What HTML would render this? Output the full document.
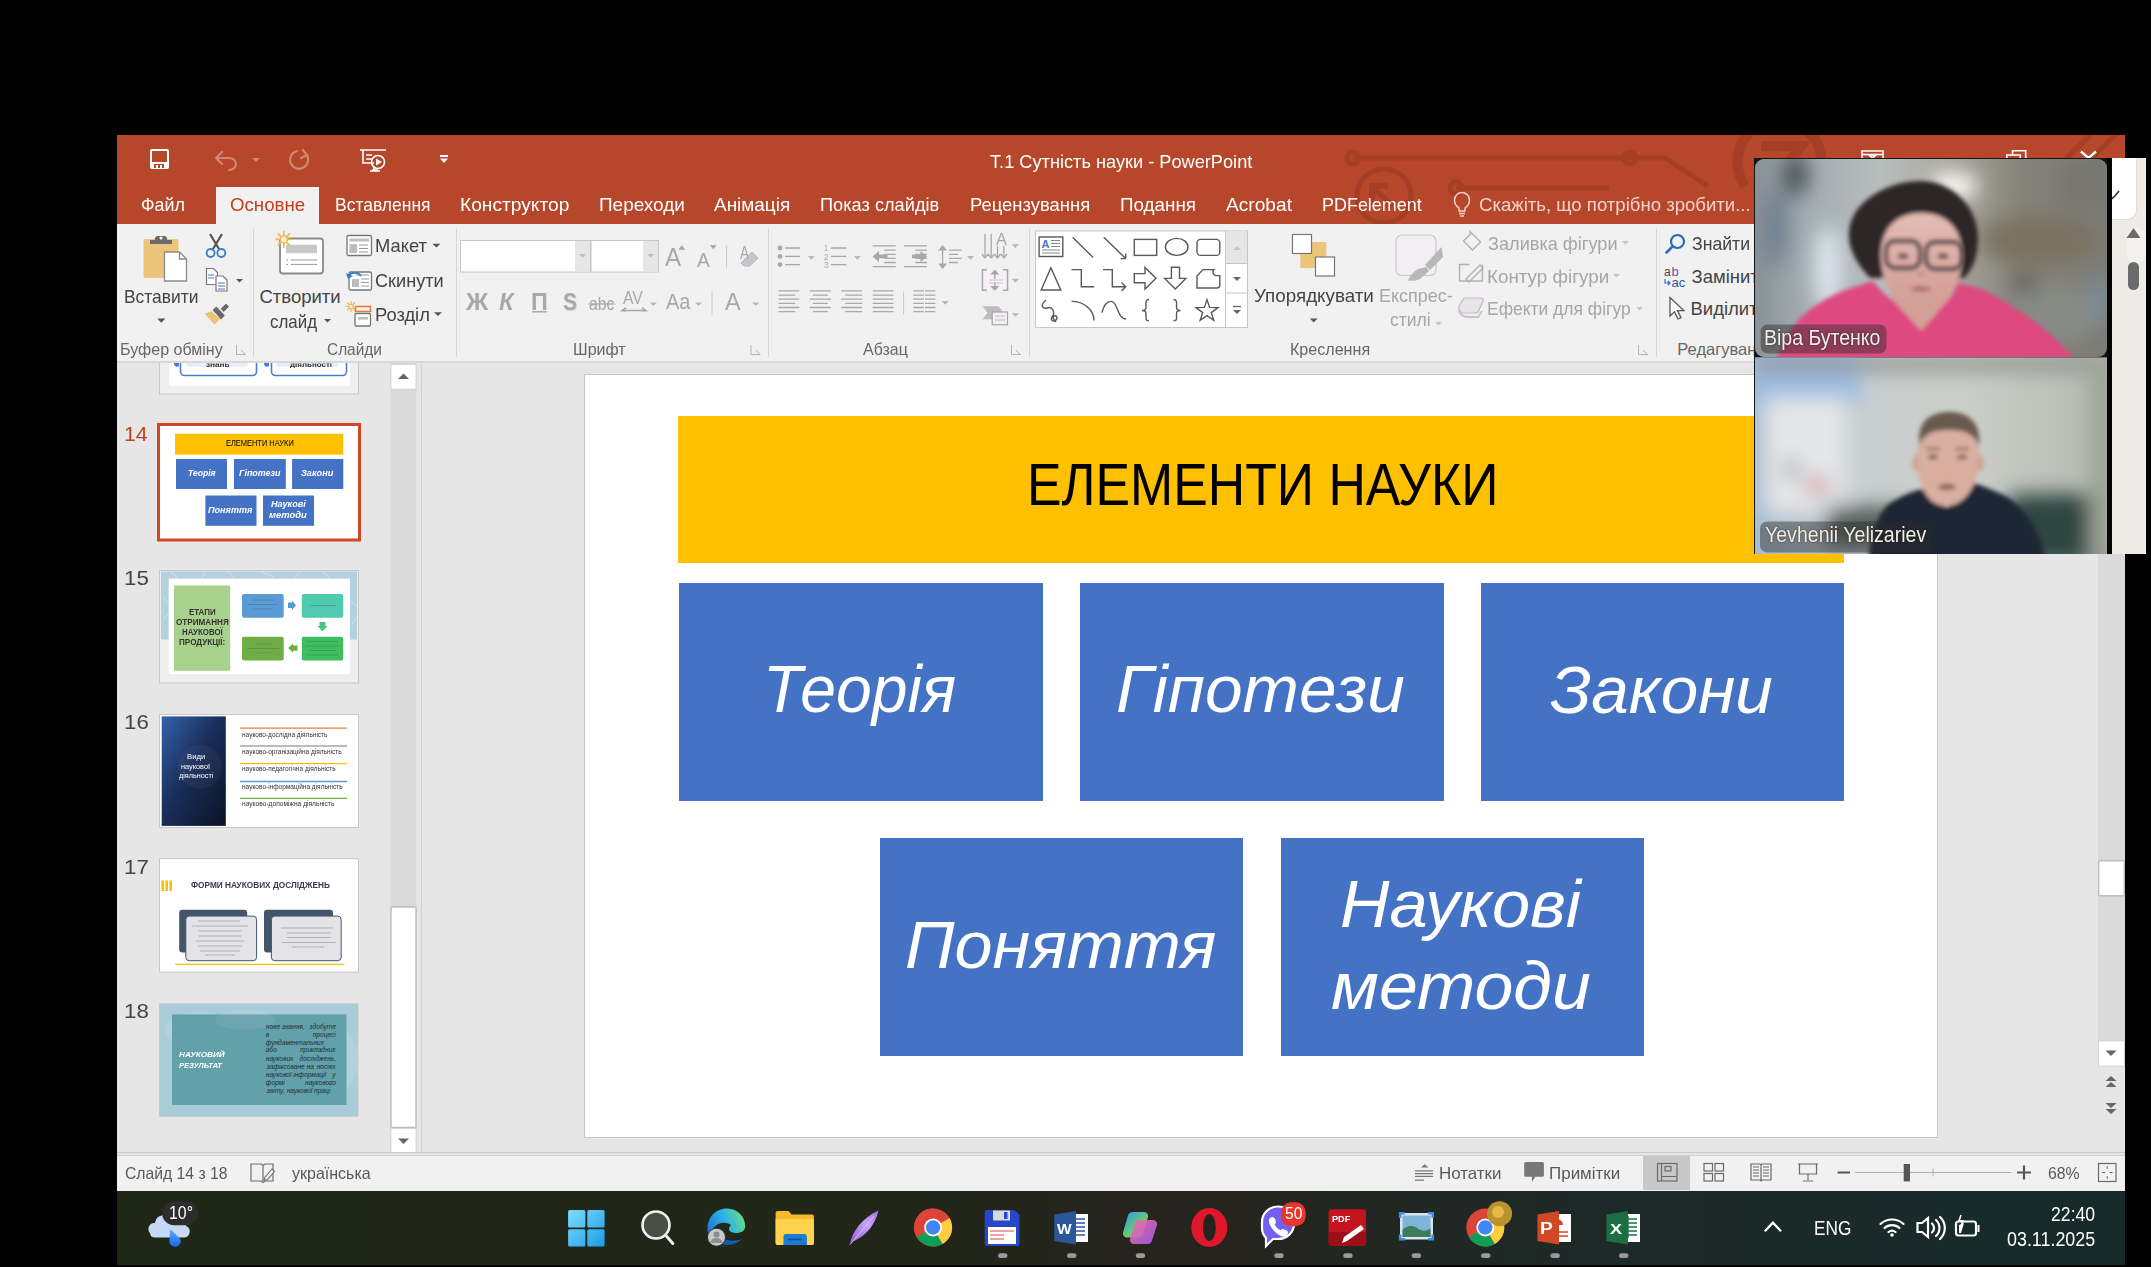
<!DOCTYPE html>
<html><head><meta charset="utf-8">
<style>
*{margin:0;padding:0;box-sizing:border-box}
html,body{width:2151px;height:1267px;overflow:hidden;background:#000;font-family:"Liberation Sans",sans-serif;position:relative}
.a{position:absolute}
.t{line-height:1;white-space:nowrap;transform-origin:0 0}
svg{position:absolute;overflow:visible}
</style></head><body>
<div class="a" style="left:117px;top:135px;width:2008px;height:89px;background:#B7472A"></div>
<svg style="left:0;top:0" width="2151" height="1267" viewBox="0 0 2151 1267"><defs><clipPath id="tclip"><rect x="117" y="135" width="2008" height="89"/></clipPath></defs><g stroke="#A43E25" stroke-width="5" fill="none" clip-path="url(#tclip)">
<path d="M1353 158 H1665 L1708 186"/><circle cx="1353" cy="158" r="6"/><circle cx="1630" cy="158" r="6"/>
<path d="M1456 188 H1609"/><circle cx="1456" cy="188" r="6"/>
<circle cx="1384" cy="196" r="27"/>
<path d="M1745 186 A42 42 0 1 1 1814 186" stroke-width="10"/>
<path d="M1761 146 H1801 L1772 184" stroke-width="10"/>
<path d="M2040 185 L2092 133 M2065 185 L2117 133" stroke-width="5.5"/>
<path d="M1372 200 V186 H1388 M1372 186 L1392 206" stroke-width="6"/>
</g></svg>
<svg style="left:0;top:0" width="2151" height="1267" viewBox="0 0 2151 1267">
<g fill="#fff"><path d="M150 151 a2 2 0 0 1 2-2 h15 a2 2 0 0 1 2 2 v16 a2 2 0 0 1-2 2 h-15 a2 2 0 0 1-2-2z M152 151 v11 h15 v-11z M154 164 v4 h10 v-4z"/></g>
<rect x="156" y="165" width="2" height="3" fill="#fff"/><rect x="160" y="165" width="2" height="3" fill="#fff"/>
<g stroke="#fff" stroke-opacity="0.35" stroke-width="2.2" fill="none" stroke-linecap="round">
<path d="M216 158 L222 152 M216 158 L222 164 M216 158 H229 a7 6 0 0 1 0 12"/>
<path d="M306 154 a9 9 0 1 1 -9 -3 M303 150 L307 155 L301 158"/>
</g>
<path d="M252 158 h8 l-4 4z" fill="#fff" fill-opacity="0.35"/>
<g stroke="#fff" stroke-width="1.6" fill="none">
<path d="M360 150 H386 M363 150 V163 H374 M366 155 H372 M366 159 H372"/>
<circle cx="378" cy="162" r="6.5"/>
<path d="M372 170 H378 M374 166 V170 M370 171 H380"/>
</g>
<path d="M376 158.5 L382 162 L376 165.5z" fill="#fff"/>
<rect x="440" y="155" width="8" height="2" fill="#fff"/><path d="M440 158.5 h8 l-4 4.5z" fill="#fff"/>
</svg>
<div class="a t" style="left:990.0px;top:152.3px;font-size:19px;color:#fff;font-style:normal;font-weight:normal;transform:scaleX(0.9575);">T.1 Сутність науки - PowerPoint</div>
<div class="a" style="left:216px;top:187px;width:103px;height:37px;background:#F1F1F1"></div>
<div class="a t" style="left:141.0px;top:196.1px;font-size:18.5px;color:#fff;font-style:normal;font-weight:normal;transform:scaleX(0.9660);">Файл</div>
<div class="a t" style="left:335.0px;top:196.1px;font-size:18.5px;color:#fff;font-style:normal;font-weight:normal;transform:scaleX(0.9448);">Вставлення</div>
<div class="a t" style="left:459.6px;top:196.1px;font-size:18.5px;color:#fff;font-style:normal;font-weight:normal;transform:scaleX(1.0365);">Конструктор</div>
<div class="a t" style="left:598.5px;top:196.1px;font-size:18.5px;color:#fff;font-style:normal;font-weight:normal;transform:scaleX(1.0245);">Переходи</div>
<div class="a t" style="left:714.4px;top:196.1px;font-size:18.5px;color:#fff;font-style:normal;font-weight:normal;transform:scaleX(1.0234);">Анімація</div>
<div class="a t" style="left:820.0px;top:196.1px;font-size:18.5px;color:#fff;font-style:normal;font-weight:normal;transform:scaleX(0.9837);">Показ слайдів</div>
<div class="a t" style="left:970.3px;top:196.1px;font-size:18.5px;color:#fff;font-style:normal;font-weight:normal;transform:scaleX(0.9960);">Рецензування</div>
<div class="a t" style="left:1120.0px;top:196.1px;font-size:18.5px;color:#fff;font-style:normal;font-weight:normal;transform:scaleX(1.0179);">Подання</div>
<div class="a t" style="left:1226.0px;top:196.1px;font-size:18.5px;color:#fff;font-style:normal;font-weight:normal;transform:scaleX(1.0343);">Acrobat</div>
<div class="a t" style="left:1321.7px;top:196.1px;font-size:18.5px;color:#fff;font-style:normal;font-weight:normal;transform:scaleX(0.9697);">PDFelement</div>
<div class="a t" style="left:229.7px;top:196.1px;font-size:18.5px;color:#C43E1C;font-style:normal;font-weight:normal;transform:scaleX(1.0096);">Основне</div>
<svg style="left:0;top:0" width="2151" height="1267" viewBox="0 0 2151 1267"><path d="M1459 211 v-3 c-3 -2 -4.5 -5 -4.5 -8 a7.5 7.5 0 0 1 15 0 c0 3 -1.5 6 -4.5 8 v3z M1459 213.5 h6 M1460 216 h4" fill="none" stroke="#F2D3C9" stroke-width="1.5"/></svg>
<div class="a t" style="left:1478.5px;top:196.1px;font-size:18.5px;color:#F2D3C9;font-style:normal;font-weight:normal;transform:scaleX(1.0035);">Скажіть, що потрібно зробити...</div>
<div class="a" style="left:117px;top:224px;width:2008px;height:139px;background:#F1F1F1;border-bottom:2px solid #D8D8D8"></div>
<div class="a" style="left:253px;top:229px;width:1px;height:128px;background:#D6D6D6"></div>
<div class="a" style="left:456px;top:229px;width:1px;height:128px;background:#D6D6D6"></div>
<div class="a" style="left:768px;top:229px;width:1px;height:128px;background:#D6D6D6"></div>
<div class="a" style="left:1029px;top:229px;width:1px;height:128px;background:#D6D6D6"></div>
<div class="a" style="left:1656px;top:229px;width:1px;height:128px;background:#D6D6D6"></div>
<svg style="left:0;top:0" width="2151" height="1267" viewBox="0 0 2151 1267">
<!-- paste -->
<rect x="143.5" y="239" width="35" height="39" rx="2" fill="#EDC57A"/>
<path d="M150 244 h22 v-4 h-5 a3 3 0 0 0 -3 -4 h-6 a3 3 0 0 0 -3 4 h-5z" fill="#6A6A6A"/>
<circle cx="161" cy="238" r="1.6" fill="#F1F1F1"/>
<path d="M164.5 252 h15 l7 7 v22 h-22z" fill="#fff" stroke="#8A8A8A" stroke-width="1.3"/>
<path d="M179.5 252 v7 h7" fill="none" stroke="#8A8A8A" stroke-width="1.3"/>
<path d="M157.3 318.5 h8 l-4 4.2z" fill="#555"/>
<!-- scissors -->
<path d="M210 234 L219 249 M222 234 L213 249" stroke="#555" stroke-width="2.2" fill="none"/>
<circle cx="210.6" cy="253" r="4" fill="none" stroke="#3E7CC5" stroke-width="1.8"/>
<circle cx="221.3" cy="253" r="4" fill="none" stroke="#3E7CC5" stroke-width="1.8"/>
<!-- copy -->
<path d="M206.5 268.5 h7 l4 4 v12 h-11z" fill="#fff" stroke="#777" stroke-width="1.2"/>
<path d="M216 276 h7 l4 4 v11 h-11z" fill="#fff" stroke="#777" stroke-width="1.2"/>
<path d="M208 275 h6 M208 278 h6 M218 283 h7 M218 286 h7 M218 289 h7" stroke="#3E7CC5" stroke-width="1.1"/>
<path d="M236 279 h7 l-3.5 3.6z" fill="#555"/>
<!-- format painter -->
<path d="M204.5 313.4 L211.9 311.3 L220.2 319 L214.4 324.8z" fill="#EDC57A"/>
<path d="M213.5 310 L216.5 307.3 L224 315.5 L221 318.5z" fill="#6A6A6A" stroke="#6A6A6A" stroke-width="1.2" stroke-linejoin="round"/>
<path d="M221.5 308.8 L226 304.3 L228.2 306.7 L223.7 311.2z" fill="#6A6A6A" stroke="#6A6A6A" stroke-width="1.2" stroke-linejoin="round"/>
<!-- new slide -->
<rect x="280" y="238.5" width="43" height="35" rx="3" fill="#fff" stroke="#8A8A8A" stroke-width="1.8"/>
<rect x="286" y="244.7" width="31" height="8.5" fill="#C8C8C8"/>
<path d="M286 260 h2 M291 260 h26 M286 264.4 h2 M291 264.4 h26" stroke="#999" stroke-width="1"/>
<g stroke="#F0B74A" stroke-width="1.6"><path d="M283.8 231 v17 M275.3 239.4 h17 M277.8 233.4 l12 12 M289.8 233.4 l-12 12"/></g>
<circle cx="283.8" cy="239.4" r="3.5" fill="#F1F1F1" stroke="#F0B74A" stroke-width="1.4"/>
<path d="M324 319 h7 l-3.5 3.5z" fill="#555"/>
<!-- layout -->
<rect x="347" y="235.5" width="24.5" height="20" rx="1.5" fill="#fff" stroke="#777" stroke-width="1.3"/>
<rect x="349.5" y="238.5" width="19.5" height="3" fill="#BDBDBD"/>
<rect x="349.5" y="244" width="7.5" height="9" fill="#BDBDBD"/>
<path d="M359 245 h9 M359 248.5 h9 M359 252 h9" stroke="#999" stroke-width="1"/>
<path d="M432.4 243.7 h8 l-4 3.8z" fill="#555"/>
<!-- reset -->
<rect x="349" y="272" width="22.5" height="18" rx="1.5" fill="#fff" stroke="#777" stroke-width="1.3"/>
<rect x="352" y="279" width="7" height="8" fill="#BDBDBD"/>
<path d="M361 279 h8 M361 282.5 h8 M361 286 h8 M356 275 h13" stroke="#999" stroke-width="1"/>
<path d="M348 277 a7 6 0 0 1 13 -1" fill="none" stroke="#3E7CC5" stroke-width="2"/>
<path d="M346 273 l2 6 l5 -3z" fill="#3E7CC5"/>
<!-- section -->
<rect x="355.5" y="306.5" width="15" height="5" fill="none" stroke="#E07B39" stroke-width="1.5"/>
<rect x="355" y="313.5" width="15.5" height="12.5" rx="1" fill="#fff" stroke="#777" stroke-width="1.3"/>
<rect x="358" y="317" width="10" height="2.6" fill="#BDBDBD"/>
<g stroke="#F0B74A" stroke-width="1.2"><path d="M351 301 v11 M345.5 306.5 h11 M347 302.5 l8 8 M355 302.5 l-8 8"/></g>
<circle cx="351" cy="306.5" r="2.2" fill="#F1F1F1" stroke="#F0B74A" stroke-width="1"/>
<path d="M434 312.2 h8 l-4 3.8z" fill="#555"/>
<!-- launchers -->
<g fill="none" stroke="#B4B4B4" stroke-width="1"><path d="M236.5 345 v9.5 h9.5 M241 350 l4 4"/><path d="M751 345 v9.5 h9.5 M755.5 350 l4 4"/><path d="M1011.5 345 v9.5 h9.5 M1016 350 l4 4"/><path d="M1638.5 345 v9.5 h9.5 M1643 350 l4 4"/></g>
</svg>
<svg style="left:0;top:0" width="2151" height="1267" viewBox="0 0 2151 1267">
<!-- font combos -->
<rect x="460.5" y="240.5" width="130" height="31.5" fill="#fff" stroke="#C6C6C6" stroke-width="1"/>
<rect x="575" y="241" width="15" height="30.5" fill="#E6E6E6"/>
<rect x="591" y="240.5" width="67.5" height="31.5" fill="#fff" stroke="#C6C6C6" stroke-width="1"/>
<rect x="643" y="241" width="15" height="30.5" fill="#E6E6E6"/>
<path d="M579 254 h7 l-3.5 3.5z M647 254 h7 l-3.5 3.5z" fill="#BDBDBD"/>
<path d="M678.3 249.7 l3.5-4.4 l3.5 4.4z M709.8 245.3 h7 l-3.5 4z" fill="#A8A8A8"/>
<path d="M726.6 245.6 v22" stroke="#C8C8C8" stroke-width="1"/>
<path d="M744 266 l-3 -3 l11 -11 l6 6 l-8 8z" fill="#C9C6CB" stroke="#B0B0B0" stroke-width="0.8"/>
<path d="M626 311 l-4 -0.3 l4 -3 M642 311 l4 -0.3 l-4 -3 M622 310.5 h22" stroke="#A8A8A8" stroke-width="1.6" fill="none"/>
<path d="M532 311.8 h14.5" stroke="#A8A8A8" stroke-width="1.5"/>
<path d="M588.5 304 h26" stroke="#A8A8A8" stroke-width="1.3"/>
<path d="M649.8 302.4 h7.2 l-3.6 3.4z M694.9 302.4 h7.2 l-3.6 3.4z M752 302.4 h7.6 l-3.8 3.4z" fill="#B8B8B8"/>
<path d="M712 292.4 v22.7" stroke="#C8C8C8" stroke-width="1"/>
<!-- paragraph -->
<g fill="#A8A8A8"><circle cx="780" cy="248" r="2.4"/><circle cx="780" cy="256.4" r="2.4"/><circle cx="780" cy="264.6" r="2.4"/></g>
<g stroke="#A8A8A8" stroke-width="1.3" fill="none">
<path d="M785 248 h15 M785 256.4 h15 M785 264.6 h15"/>
<path d="M831 248 h15.5 M831 256.4 h15.5 M831 264.6 h15.5"/>
<path d="M872.7 245.9 h23 M872.7 266.7 h23 M884.2 250.1 h11.5 M884.2 254.3 h11.5 M884.2 258.3 h11.5 M884.2 262.5 h11.5"/>
<path d="M903.9 245.9 h23 M903.9 266.7 h23 M915.4 250.1 h11.5 M915.4 254.3 h11.5 M915.4 258.3 h11.5 M915.4 262.5 h11.5"/>
<path d="M942.6 246 v22 M949 250.1 h12.6 M949 254.3 h9 M949 258.3 h12.6 M949 262.5 h9"/>
<path d="M985 234 v23 M991.2 234 v23 M997.5 246 v11 M1003.9 246 v11"/>
<path d="M778.5 290.9 h20.8 M778.5 295.1 h16.6 M778.5 299.2 h20.8 M778.5 303.4 h16.6 M778.5 307.5 h20.8 M778.5 311.7 h16.6"/>
<path d="M809.9 290.9 h20.9 M812.9 295.1 h14.9 M809.9 299.2 h20.9 M812.9 303.4 h14.9 M809.9 307.5 h20.9 M812.9 311.7 h14.9"/>
<path d="M841.3 290.9 h20.8 M845.2 295.1 h16.9 M841.3 299.2 h20.8 M845.2 303.4 h16.9 M841.3 307.5 h20.8 M845.2 311.7 h16.9"/>
<path d="M872.7 290.9 h20.8 M872.7 295.1 h20.8 M872.7 299.2 h20.8 M872.7 303.4 h20.8 M872.7 307.5 h20.8 M872.7 311.7 h20.8"/>
<path d="M913.2 290.9 h10.6 M913.2 295.1 h10.6 M913.2 299.2 h10.6 M913.2 303.4 h10.6 M913.2 307.5 h10.6 M913.2 311.7 h10.6 M925 290.9 h10.4 M925 295.1 h10.4 M925 299.2 h10.4 M925 303.4 h10.4 M925 307.5 h10.4 M925 311.7 h10.4"/>
<path d="M903.6 291.5 v22.5" stroke="#C8C8C8" stroke-width="1"/>
<path d="M987 269.7 h-4.5 v20.6 h4.5 M1003 269.7 h4.5 v20.6 h-4.5"/>
<path d="M994.8 271 v7 M994.8 283 v7"/>
</g>
<path d="M983 269.7 h24 v20.6 h-24z" fill="#F7F0F7"/><path d="M872.5 256.4 l6.5 -5.5 v3.6 h8.5 v3.8 h-8.5 v3.6z M927 256.4 l-6.5 -5.5 v3.6 h-8.5 v3.8 h8.5 v3.6z M942.6 245 l-4.5 5.5 h9z M942.6 269 l-4.5 -5.5 h9z M994.8 269.5 l-4.5 5 h9z M994.8 291 l-4.5 -5 h9z" fill="#A8A8A8"/>
<path d="M987 269.7 h-4.5 v20.6 h4.5 M1003 269.7 h4.5 v20.6 h-4.5 M994.8 272 v7 M994.8 282 v7" fill="none" stroke="#A8A8A8" stroke-width="1.4"/>
<path d="M985 258 l-3 -4 M985 258 l3 -4 M991.2 258 l-3 -4 M991.2 258 l3 -4 M997.5 258 l-3 -4 M997.5 258 l3 -4 M1003.9 258 l-3 -4 M1003.9 258 l3 -4" stroke="#A8A8A8" stroke-width="1.3" fill="none"/>
<path d="M989 280 h14 M989 283 h14" stroke="#C8C8C8" stroke-width="1"/>
<path d="M982.5 306.3 h16 l5 6.5 l-5 6.5 h-16 l5 -6.5z" fill="#BDBDBD"/>
<rect x="992.2" y="312" width="15.3" height="12.7" fill="#F5EEF5" stroke="#A8A8A8" stroke-width="1.2"/>
<path d="M995 316 h10 M995 320 h10" stroke="#BDBDBD" stroke-width="1"/>
<path d="M808 256 h6.7 l-3.35 3.7z M854 256 h6.9 l-3.45 3.7z M967 256 h7 l-3.5 3.7z M1011.7 244.3 h7.3 l-3.65 3.7z M1011.7 278.8 h7.3 l-3.65 3.6z M1011.7 313.2 h7.3 l-3.65 3.6z M941.6 301.1 h7.3 l-3.65 3.7z" fill="#B8B8B8"/>
<!-- gallery -->
<rect x="1035.5" y="231" width="212" height="96.5" fill="#fff" stroke="#C6C6C6" stroke-width="1"/>
<rect x="1225.5" y="231.5" width="21.5" height="32" fill="#E6E6E6"/>
<path d="M1225.5 231 v96.5 M1225.5 263.5 h22 M1225.5 293 h22" stroke="#C6C6C6" stroke-width="1" fill="none"/>
<path d="M1233 250 l4 -4 l4 4z" fill="#C8C8C8"/>
<path d="M1233 277 h8 l-4 4z M1233 310 h8 l-4 4z" fill="#666"/>
<path d="M1233 306.5 h8" stroke="#666" stroke-width="1.3"/>
<g stroke="#595959" stroke-width="1.4" fill="none">
<rect x="1039.1" y="237" width="23.7" height="19.5"/>
<path d="M1051 240.5 h9 M1051 243.5 h9 M1051 246.5 h9 M1042 250 h18 M1042 253 h18" stroke="#888" stroke-width="1"/>
<path d="M1072.6 237.2 L1093.1 257.5"/>
<path d="M1103.8 237.2 L1125.7 258.6 M1125.7 258.6 h-5 M1125.7 258.6 v-5"/>
<rect x="1134.3" y="239.4" width="22.4" height="16"/>
<ellipse cx="1176.7" cy="246.9" rx="11.3" ry="8.5"/>
<rect x="1197" y="239.4" width="22.8" height="16" rx="3.5"/>
<path d="M1050.9 267.7 L1041.2 290 H1060.8z"/>
<path d="M1071.5 269.6 H1081.3 V286.7 H1094.2"/>
<path d="M1103 269.6 H1112.3 V286.7 H1125.7 M1121.5 282.5 l4.2 4.2 l-4.2 4.2"/>
<path d="M1134.3 273.6 H1145 V267.5 L1156 278.3 L1145 289.1 V282.7 H1134.3z"/>
<path d="M1171.4 267.2 H1179.5 V278.4 H1185.9 L1175.3 289.1 L1164.7 278.4 H1171.4z"/>
<path d="M1203 269.6 H1214 a3.5 3.5 0 0 0 2 6 H1219.8 V285 a3 3 0 0 1 -3 3 H1197 V276z"/>
<path d="M1046 300 c-6 5 -4 9 1 8 c5 -2 9 4 5 9 c-3 4 4 6 5 1 c0 -3 -4 -3 -4 0 l3 4"/>
<path d="M1071.5 301.4 C1084 301.4 1094 310 1094 320.6"/>
<path d="M1102 312.6 C1104 304 1108 301.4 1111.3 301.4 C1118 301.4 1117 319 1126.2 319"/>
<path d="M1149 299.5 c-4 0 -3 4 -3 8 c0 2 -2 3 -4 3 c2 0 4 1 4 3 c0 4 -1 8 3 7"/>
<path d="M1173.5 299.5 c4 0 3 4 3 8 c0 2 2 3 4 3 c-2 0 -4 1 -4 3 c0 4 1 8 -3 7"/>
<path d="M1207 299.6 L1209.6 307.4 L1218 307.6 L1211.3 312.6 L1213.8 320.3 L1207 315.6 L1200.2 320.3 L1202.7 312.6 L1196 307.6 L1204.4 307.4z"/>
</g>
<text x="1041.5" y="247.8" font-family="Liberation Sans" font-weight="bold" font-size="11" fill="#3E7CC5">A</text>
<!-- arrange -->
<rect x="1300.3" y="242.1" width="26" height="26" fill="#EDC57A"/>
<rect x="1292.5" y="234.5" width="19" height="19" fill="#fff" stroke="#777" stroke-width="1.2"/>
<rect x="1315.5" y="257" width="19" height="19" fill="#fff" stroke="#777" stroke-width="1.2"/>
<path d="M1309.8 318.5 h7.8 l-3.9 4z" fill="#555"/><path d="M1435 322 h7 l-3.5 3.5z M1613 274 h7 l-3.5 3.5z M1622 241 h7 l-3.5 3.5z M1636 307 h7 l-3.5 3.5z" fill="#C4C4C4"/>
<!-- quick styles -->
<rect x="1396" y="235" width="40" height="40.5" rx="6" fill="#F3EEF3" stroke="#C8C8C8" stroke-width="1.2"/>
<path d="M1441.6 247 L1443 257 L1430 270 L1425 265z M1426 267 L1429 271 L1420 279 C1416 281 1411 281 1407.7 280.5 C1410 276 1413 272 1418 269z" fill="#B8B8B8"/>
<!-- fill bucket / pencil / effects -->
<g stroke="#B0B0B0" stroke-width="1.4" fill="none">
<path d="M1463.5 241 l8 -8 l9 9 l-8 8z M1470 233 v-2.5"/>
<path d="M1459.5 281 v-16.5 h10 M1482.4 264.5 v16.5 h-23 M1466 279 l14 -14 l3 3 l-14 14 z"/>
</g>
<path d="M1459 306 l5 -8 h17 q3 0 2 3 l-4 9 q-1 3 -4 3 h-14 q-3 0 -2 -3z" fill="#E9E4EA" stroke="#BDBDBD" stroke-width="1.2"/>
<path d="M1460 310 q0 6 6 7 h12 l4 -6" fill="none" stroke="#C6C6C6" stroke-width="2"/>
<!-- find replace select -->
<circle cx="1677.5" cy="241.5" r="6.5" fill="none" stroke="#2B6CB8" stroke-width="2.2"/>
<path d="M1672.5 246.5 L1666.5 252.5" stroke="#2B6CB8" stroke-width="2.6" stroke-linecap="round"/>
<text x="1664" y="276" font-family="Liberation Sans" font-size="12" fill="#444">a</text>
<text x="1671.5" y="276" font-family="Liberation Sans" font-size="13" fill="#7B4FA8">b</text>
<text x="1671.5" y="287" font-family="Liberation Sans" font-size="13" fill="#2F5597">ac</text>
<path d="M1665 279 v4 h5 M1668 281 l2 2 l-2 2" fill="none" stroke="#2B6CB8" stroke-width="1.2"/>
<path d="M1670 297.5 V316 L1674.5 311.8 L1678 319 L1681 317.6 L1677.6 310.6 L1683.8 310.6z" fill="#fff" stroke="#555" stroke-width="1.3"/>
</svg>
<div class="a t" style="left:465.5px;top:290.0px;font-size:24px;color:#A8A8A8;font-style:normal;font-weight:bold;transform:scaleX(1.0217);">Ж</div>
<div class="a t" style="left:499.0px;top:290.0px;font-size:24px;color:#A8A8A8;font-style:italic;font-weight:bold;transform:scaleX(0.9882);">К</div>
<div class="a t" style="left:530.9px;top:290.0px;font-size:24px;color:#A8A8A8;font-style:normal;font-weight:bold;transform:scaleX(0.9733);">П</div>
<div class="a t" style="left:563.4px;top:290.0px;font-size:24px;color:#A8A8A8;font-style:normal;font-weight:bold;transform:scaleX(0.8687);text-shadow:1px 1px 1px #ccc;">S</div>
<div class="a t" style="left:589.0px;top:295.1px;font-size:18px;color:#A8A8A8;font-style:normal;font-weight:normal;transform:scaleX(0.8718);">abc</div>
<div class="a t" style="left:623.1px;top:290.1px;font-size:17.5px;color:#A8A8A8;font-style:normal;font-weight:normal;transform:scaleX(0.8984);">AV</div>
<div class="a t" style="left:665.9px;top:291.2px;font-size:22.5px;color:#A8A8A8;font-style:normal;font-weight:normal;transform:scaleX(0.8891);">Aa</div>
<div class="a t" style="left:725.2px;top:290.0px;font-size:24px;color:#A8A8A8;font-style:normal;font-weight:normal;transform:scaleX(0.9750);">A</div>
<div class="a t" style="left:664.7px;top:245.2px;font-size:25px;color:#A8A8A8;font-style:normal;font-weight:normal;transform:scaleX(0.9706);">A</div>
<div class="a t" style="left:696.6px;top:249.5px;font-size:20px;color:#A8A8A8;font-style:normal;font-weight:normal;transform:scaleX(0.9571);">A</div>
<div class="a t" style="left:740.3px;top:243.6px;font-size:18px;color:#A8A8A8;font-style:normal;font-weight:normal;transform:scaleX(0.7500);">A</div>
<div class="a t" style="left:996.0px;top:230.6px;font-size:17px;color:#A8A8A8;font-style:normal;font-weight:normal;transform:scaleX(0.9583);">A</div>
<div class="a t" style="left:823.5px;top:244.4px;font-size:9px;color:#A8A8A8;font-style:normal;font-weight:normal;transform:scaleX(0.8000);">1</div>
<div class="a t" style="left:823.5px;top:252.9px;font-size:9px;color:#A8A8A8;font-style:normal;font-weight:normal;transform:scaleX(0.9000);">2</div>
<div class="a t" style="left:823.5px;top:260.9px;font-size:9px;color:#A8A8A8;font-style:normal;font-weight:normal;transform:scaleX(0.9000);">3</div>
<div class="a t" style="left:120.2px;top:341.0px;font-size:16.5px;color:#666;font-style:normal;font-weight:normal;transform:scaleX(0.9722);">Буфер обміну</div>
<div class="a t" style="left:326.8px;top:341.0px;font-size:16.5px;color:#666;font-style:normal;font-weight:normal;transform:scaleX(0.9340);">Слайди</div>
<div class="a t" style="left:572.5px;top:341.0px;font-size:16.5px;color:#666;font-style:normal;font-weight:normal;transform:scaleX(0.9678);">Шрифт</div>
<div class="a t" style="left:863.2px;top:341.0px;font-size:16.5px;color:#666;font-style:normal;font-weight:normal;transform:scaleX(0.9672);">Абзац</div>
<div class="a t" style="left:1289.8px;top:341.0px;font-size:16.5px;color:#666;font-style:normal;font-weight:normal;transform:scaleX(0.9745);">Креслення</div>
<div class="a t" style="left:1677.3px;top:341.0px;font-size:16.5px;color:#666;font-style:normal;font-weight:normal;">Редагуван</div>
<div class="a t" style="left:123.5px;top:288.2px;font-size:18.5px;color:#444;font-style:normal;font-weight:normal;transform:scaleX(0.9411);">Вставити</div>
<div class="a t" style="left:259.5px;top:288.2px;font-size:18.5px;color:#444;font-style:normal;font-weight:normal;">Створити</div>
<div class="a t" style="left:270.2px;top:312.6px;font-size:18.5px;color:#444;font-style:normal;font-weight:normal;transform:scaleX(0.9135);">слайд</div>
<div class="a t" style="left:374.6px;top:237.1px;font-size:18.5px;color:#444;font-style:normal;font-weight:normal;transform:scaleX(0.9907);">Макет</div>
<div class="a t" style="left:375.0px;top:271.9px;font-size:18.5px;color:#444;font-style:normal;font-weight:normal;transform:scaleX(0.9795);">Скинути</div>
<div class="a t" style="left:374.6px;top:306.1px;font-size:18.5px;color:#444;font-style:normal;font-weight:normal;transform:scaleX(0.9909);">Розділ</div>
<div class="a t" style="left:1253.7px;top:286.8px;font-size:18.5px;color:#444;font-style:normal;font-weight:normal;transform:scaleX(1.0157);">Упорядкувати</div>
<div class="a t" style="left:1378.7px;top:286.8px;font-size:18.5px;color:#A6A6A6;font-style:normal;font-weight:normal;transform:scaleX(0.9728);">Експрес-</div>
<div class="a t" style="left:1390.4px;top:311.2px;font-size:18.5px;color:#A6A6A6;font-style:normal;font-weight:normal;transform:scaleX(0.9462);">стилі</div>
<div class="a t" style="left:1488.0px;top:234.8px;font-size:18.5px;color:#A6A6A6;font-style:normal;font-weight:normal;transform:scaleX(0.9806);">Заливка фігури</div>
<div class="a t" style="left:1487.0px;top:267.9px;font-size:18.5px;color:#A6A6A6;font-style:normal;font-weight:normal;transform:scaleX(1.0165);">Контур фігури</div>
<div class="a t" style="left:1487.1px;top:300.1px;font-size:18.5px;color:#A6A6A6;font-style:normal;font-weight:normal;transform:scaleX(0.9433);">Ефекти для фігур</div>
<div class="a t" style="left:1691.5px;top:234.8px;font-size:18.5px;color:#444;font-style:normal;font-weight:normal;transform:scaleX(0.9539);">Знайти</div>
<div class="a t" style="left:1691.5px;top:267.9px;font-size:18.5px;color:#444;font-style:normal;font-weight:normal;">Замінити</div>
<div class="a t" style="left:1690.5px;top:300.1px;font-size:18.5px;color:#444;font-style:normal;font-weight:normal;">Виділити</div>
<div class="a" style="left:117px;top:363px;width:2008px;height:792px;background:#E6E6E6"></div>
<svg style="left:0;top:0" width="2151" height="1267" viewBox="0 0 2151 1267">
<defs><clipPath id="paneclip"><rect x="117" y="363" width="300" height="791"/></clipPath></defs>
<g clip-path="url(#paneclip)">
<!-- thumb13 -->
<rect x="159.5" y="361.5" width="199" height="32.5" fill="#EFEFEF" stroke="#C8C8C8" stroke-width="1"/>
<rect x="169" y="362" width="181" height="23.6" fill="#fff"/>
<rect x="180.5" y="350" width="76" height="25.5" rx="4" fill="#fff" stroke="#4A7DD0" stroke-width="1.6"/>
<rect x="271.5" y="350" width="75" height="25.5" rx="4" fill="#fff" stroke="#4A7DD0" stroke-width="1.6"/>
<rect x="186" y="361" width="62" height="6" rx="3" fill="#E6ECF8"/>
<rect x="276" y="361" width="62" height="6" rx="3" fill="#E6ECF8"/>
<path d="M174 361 h5 v5 a3 3 0 0 1 -5 -2z M264 361 h5 v5 a3 3 0 0 1 -5 -2z" fill="#4A7DD0"/>
</g>
<!-- thumb14 -->
<rect x="158.5" y="424.5" width="201" height="115.5" fill="#fff" stroke="#D24726" stroke-width="3"/>
<rect x="175" y="433.8" width="168.3" height="20.8" fill="#FFC000"/>
<g fill="#4472C4"><rect x="176" y="459" width="51" height="30"/><rect x="234" y="459" width="51.8" height="30"/><rect x="292.1" y="459" width="51.2" height="30"/><rect x="205.4" y="495.5" width="51.1" height="30.3"/><rect x="263" y="495.5" width="51" height="30.3"/></g>
<!-- thumb15 -->
<rect x="159.5" y="570.5" width="199" height="112.5" fill="#EEEEEE" stroke="#C8C8C8" stroke-width="1"/>
<path d="M161 571.5 H357 V639.5 H349.8 V578.8 H168.8 V639.5 H161z" fill="#B3D1DE"/>
<g stroke="#D6E8EF" stroke-width="1" fill="none" opacity="0.8"><path d="M170 572 l8 6 M205 571 l-3 7 M228 571 l6 7 M262 572 l12 5 M300 571 l-5 7 M322 572 l8 6 M163 595 l4 8 M163 620 l5 -6 M351 600 l5 6 M352 625 l4 -8"/></g>
<rect x="168.8" y="578.8" width="181" height="95.2" fill="#fff"/>
<rect x="173.9" y="585.5" width="56.3" height="85.3" fill="#A9D18E"/>
<rect x="242" y="593.9" width="41.7" height="23.9" rx="2" fill="#5B9BD5"/>
<rect x="301.8" y="593.9" width="41.4" height="23.9" rx="2" fill="#4FC9B0"/>
<rect x="242" y="636.8" width="41.7" height="23.7" rx="2" fill="#70AD47"/>
<rect x="301.8" y="636.8" width="41.4" height="23.7" rx="2" fill="#3EBE5F"/>
<path d="M288 602.5 h4 v-2 l4 4.7 l-4 4.7 v-2 h-4z" fill="#5B9BD5"/>
<path d="M319.5 622 h6 v4 h2 l-5 5.3 l-5 -5.3 h2z" fill="#48C382"/>
<path d="M297.5 645.5 h-4.5 v-2 l-4.8 4.6 l4.8 4.6 v-2 h4.5z" fill="#70AD47"/>
<g stroke="#3B3B3B" stroke-width="0.8" opacity="0.3"><path d="M252 600 h22 M248 604.5 h30 M253 609 h20"/><path d="M310 605.5 h26"/><path d="M255 644 h17 M247 648.5 h32 M256 653 h15"/><path d="M307 641.5 h31 M305 646 h35 M309 650.5 h27 M307 655 h31"/></g>
<!-- thumb16 -->
<rect x="159.5" y="714.5" width="199" height="113" fill="#fff" stroke="#C8C8C8" stroke-width="1"/>
<defs><linearGradient id="g16" x1="0" y1="0" x2="1" y2="1"><stop offset="0" stop-color="#3462AB"/><stop offset="0.45" stop-color="#1B2F5C"/><stop offset="1" stop-color="#0A1224"/></linearGradient></defs>
<rect x="161.7" y="716.4" width="64.1" height="109.5" fill="url(#g16)"/>
<circle cx="200" cy="767" r="22" fill="#fff" opacity="0.04"/>
<path d="M240 728.2 h107.2" stroke="#ED7D31" stroke-width="1.3"/>
<path d="M240 746 h107.2" stroke="#A5A5A5" stroke-width="1.3"/>
<path d="M240 763.7 h107.2" stroke="#FFC000" stroke-width="1.3"/>
<path d="M240 781.5 h107.2" stroke="#5B9BD5" stroke-width="1.3"/>
<path d="M240 798.3 h107.2" stroke="#70AD47" stroke-width="1.3"/>
<!-- thumb17 -->
<rect x="159.5" y="858.7" width="199" height="113.4" fill="#fff" stroke="#C8C8C8" stroke-width="1"/>
<g fill="#FFC000"><rect x="161.4" y="880.4" width="2.6" height="10.6"/><rect x="165.4" y="880.4" width="2.6" height="10.6"/><rect x="169.4" y="880.4" width="2.6" height="10.6"/></g>
<rect x="179.2" y="909.7" width="68" height="42.9" rx="3" fill="#44546A"/>
<rect x="185.8" y="916.1" width="70.8" height="44.6" rx="3.5" fill="#E4E4E6" stroke="#44546A" stroke-width="1"/>
<rect x="264" y="909.7" width="69" height="42.9" rx="3" fill="#44546A"/>
<rect x="271.4" y="916.1" width="69.8" height="44.6" rx="3.5" fill="#E4E4E6" stroke="#44546A" stroke-width="1"/>
<g stroke="#555" stroke-width="0.7" opacity="0.5"><path d="M198 921 h42 M192 926 h56 M198 931 h44 M198 936 h44 M196 941 h48 M198 946 h44 M200 951 h40 M205 955 h30"/><path d="M281 928 h52 M287 933 h44 M287 937.5 h44 M282 942.5 h54 M292 947 h32"/></g>
<path d="M175.2 964.4 h169.2" stroke="#FFC000" stroke-width="1.4"/>
<!-- thumb18 -->
<rect x="159.5" y="1003.8" width="198.5" height="112.5" fill="#A9CCD9" stroke="#C8C8C8" stroke-width="1"/>
<ellipse cx="200" cy="1030" rx="35" ry="18" fill="#fff" opacity="0.12"/>
<ellipse cx="340" cy="1060" rx="18" ry="30" fill="#fff" opacity="0.1"/>
<rect x="172" y="1014.4" width="174.5" height="90.6" fill="#62A0AA"/>
<ellipse cx="245" cy="1020" rx="30" ry="10" fill="#fff" opacity="0.07"/>

<!-- pane scrollbar -->
<rect x="390.5" y="363" width="26" height="791" fill="#DADADA"/>
<rect x="391" y="364.5" width="25" height="24.6" fill="#fff" stroke="#D0D0D0" stroke-width="0.8"/>
<path d="M398 379.1 l5.5 -5.6 l5.5 5.6z" fill="#666"/>
<rect x="391" y="907" width="25" height="220.5" rx="1" fill="#fff" stroke="#BDBDBD" stroke-width="1.4"/>
<rect x="391" y="1128.5" width="25" height="25" fill="#fff" stroke="#D0D0D0" stroke-width="0.8"/>
<path d="M398 1138.5 h11 l-5.5 5.6z" fill="#666"/>
<path d="M421.5 364 V1154" stroke="#D0D0D0" stroke-width="1"/>
<!-- main scrollbar -->
<rect x="2098" y="363" width="27" height="703" fill="#DADADA"/>
<rect x="2098.7" y="860.7" width="25.6" height="35" rx="1" fill="#fff" stroke="#BDBDBD" stroke-width="1.4"/>
<rect x="2098.5" y="1041" width="26" height="25" fill="#fff" stroke="#D0D0D0" stroke-width="0.8"/>
<path d="M2105.5 1050.5 h11 l-5.5 5.6z" fill="#666"/>
<path d="M2105.5 1081 l5.5 -5 l5.5 5z M2105.5 1087 l5.5 -5 l5.5 5z M2105.5 1103 h11 l-5.5 5z M2105.5 1109 h11 l-5.5 5z" fill="#666"/>
</svg>
<div class="a t" style="left:124.0px;top:423.2px;font-size:21px;color:#C43E1C;font-style:normal;font-weight:normal;transform:scaleX(1.0141);">14</div>
<div class="a t" style="left:123.9px;top:567.2px;font-size:21px;color:#444;font-style:normal;font-weight:normal;transform:scaleX(1.0609);">15</div>
<div class="a t" style="left:123.9px;top:711.2px;font-size:21px;color:#444;font-style:normal;font-weight:normal;transform:scaleX(1.0609);">16</div>
<div class="a t" style="left:123.9px;top:855.7px;font-size:21px;color:#444;font-style:normal;font-weight:normal;transform:scaleX(1.0609);">17</div>
<div class="a t" style="left:123.9px;top:1000.4px;font-size:21px;color:#444;font-style:normal;font-weight:normal;transform:scaleX(1.0609);">18</div>
<div class="a t" style="left:206.0px;top:360.6px;font-size:7.5px;color:#333;font-style:normal;font-weight:bold;transform:scaleX(1.0929);clip-path:inset(3px 0 0 0);">знань</div>
<div class="a t" style="left:290.0px;top:360.6px;font-size:7.5px;color:#333;font-style:normal;font-weight:bold;transform:scaleX(1.0646);clip-path:inset(3px 0 0 0);">діяльності</div>
<div class="a t" style="left:225.7px;top:439.0px;font-size:9px;color:#000;font-style:normal;font-weight:normal;transform:scaleX(0.8275);">ЕЛЕМЕНТИ НАУКИ</div>
<div class="a t" style="left:187.6px;top:468.3px;font-size:9.5px;color:#fff;font-style:italic;font-weight:bold;transform:scaleX(0.9007);">Теорія</div>
<div class="a t" style="left:238.7px;top:468.3px;font-size:9.5px;color:#fff;font-style:italic;font-weight:bold;transform:scaleX(0.9342);">Гіпотези</div>
<div class="a t" style="left:300.8px;top:468.3px;font-size:9.5px;color:#fff;font-style:italic;font-weight:bold;transform:scaleX(0.9602);">Закони</div>
<div class="a t" style="left:207.9px;top:505.0px;font-size:9.5px;color:#fff;font-style:italic;font-weight:bold;transform:scaleX(0.9560);">Поняття</div>
<div class="a t" style="left:270.8px;top:498.7px;font-size:9.5px;color:#fff;font-style:italic;font-weight:bold;transform:scaleX(0.9575);">Наукові</div>
<div class="a t" style="left:269.3px;top:510.0px;font-size:9.5px;color:#fff;font-style:italic;font-weight:bold;transform:scaleX(0.9893);">методи</div>
<div class="a t" style="left:189.0px;top:608.2px;font-size:9px;color:#333;font-style:normal;font-weight:bold;transform:scaleX(0.8797);">ЕТАПИ</div>
<div class="a t" style="left:176.2px;top:618.1px;font-size:9px;color:#333;font-style:normal;font-weight:bold;transform:scaleX(0.9023);">ОТРИМАННЯ</div>
<div class="a t" style="left:181.8px;top:627.9px;font-size:9px;color:#333;font-style:normal;font-weight:bold;transform:scaleX(0.8761);">НАУКОВОЇ</div>
<div class="a t" style="left:179.2px;top:638.3px;font-size:9px;color:#333;font-style:normal;font-weight:bold;transform:scaleX(0.9007);">ПРОДУКЦІЇ:</div>
<div class="a t" style="left:187.0px;top:753.4px;font-size:7.5px;color:#fff;font-style:normal;font-weight:normal;transform:scaleX(1.0303);">Види</div>
<div class="a t" style="left:181.1px;top:762.8px;font-size:7.5px;color:#fff;font-style:normal;font-weight:normal;transform:scaleX(0.9776);">наукової</div>
<div class="a t" style="left:178.5px;top:771.6px;font-size:7.5px;color:#fff;font-style:normal;font-weight:normal;transform:scaleX(0.9670);">діяльності</div>
<div class="a t" style="left:242.3px;top:730.9px;font-size:7px;color:#333;font-style:normal;font-weight:normal;transform:scaleX(0.9299);">науково-дослідна діяльність</div>
<div class="a t" style="left:242.3px;top:747.7px;font-size:7px;color:#333;font-style:normal;font-weight:normal;transform:scaleX(0.9342);">науково-організаційна діяльність</div>
<div class="a t" style="left:242.3px;top:765.4px;font-size:7px;color:#333;font-style:normal;font-weight:normal;transform:scaleX(0.9342);">науково-педагогічна діяльність</div>
<div class="a t" style="left:242.3px;top:783.2px;font-size:7px;color:#333;font-style:normal;font-weight:normal;transform:scaleX(0.9324);">науково-інформаційна діяльність</div>
<div class="a t" style="left:242.3px;top:799.8px;font-size:7px;color:#333;font-style:normal;font-weight:normal;transform:scaleX(0.9480);">науково-допоміжна діяльність</div>
<div class="a t" style="left:190.5px;top:881.3px;font-size:8.7px;color:#3A3A55;font-style:normal;font-weight:bold;transform:scaleX(0.9508);">ФОРМИ НАУКОВИХ ДОСЛІДЖЕНЬ</div>
<div class="a t" style="left:265.8px;top:1023.9px;font-size:6.6px;color:#1B2E38;font-style:italic;font-weight:normal;">нове знання,</div>
<div class="a t" style="left:309.6px;top:1023.9px;font-size:6.6px;color:#1B2E38;font-style:italic;font-weight:normal;">здобуте</div>
<div class="a t" style="left:265.8px;top:1031.7px;font-size:6.6px;color:#1B2E38;font-style:italic;font-weight:normal;">в</div>
<div class="a t" style="left:312.7px;top:1031.7px;font-size:6.6px;color:#1B2E38;font-style:italic;font-weight:normal;">процесі</div>
<div class="a t" style="left:265.8px;top:1040.0px;font-size:6.6px;color:#1B2E38;font-style:italic;font-weight:normal;">фундаментальних</div>
<div class="a t" style="left:265.8px;top:1047.3px;font-size:6.6px;color:#1B2E38;font-style:italic;font-weight:normal;">або</div>
<div class="a t" style="left:299.9px;top:1047.3px;font-size:6.6px;color:#1B2E38;font-style:italic;font-weight:normal;">прикладних</div>
<div class="a t" style="left:265.8px;top:1056.0px;font-size:6.6px;color:#1B2E38;font-style:italic;font-weight:normal;">наукових</div>
<div class="a t" style="left:299.6px;top:1056.0px;font-size:6.6px;color:#1B2E38;font-style:italic;font-weight:normal;">досліджень,</div>
<div class="a t" style="left:266.8px;top:1064.2px;font-size:6.6px;color:#1B2E38;font-style:italic;font-weight:normal;">зафіксоване на</div>
<div class="a t" style="left:316.7px;top:1064.2px;font-size:6.6px;color:#1B2E38;font-style:italic;font-weight:normal;">носіях</div>
<div class="a t" style="left:265.8px;top:1071.7px;font-size:6.6px;color:#1B2E38;font-style:italic;font-weight:normal;">наукової інформації</div>
<div class="a t" style="left:332.3px;top:1071.7px;font-size:6.6px;color:#1B2E38;font-style:italic;font-weight:normal;">у</div>
<div class="a t" style="left:265.8px;top:1080.0px;font-size:6.6px;color:#1B2E38;font-style:italic;font-weight:normal;">формі</div>
<div class="a t" style="left:305.0px;top:1080.0px;font-size:6.6px;color:#1B2E38;font-style:italic;font-weight:normal;">наукового</div>
<div class="a t" style="left:266.8px;top:1087.6px;font-size:6.6px;color:#1B2E38;font-style:italic;font-weight:normal;">звіту, наукової праці</div>
<div class="a t" style="left:179.0px;top:1051.2px;font-size:8px;color:#fff;font-style:italic;font-weight:bold;transform:scaleX(1.0214);">НАУКОВИЙ</div>
<div class="a t" style="left:179.0px;top:1061.7px;font-size:8px;color:#fff;font-style:italic;font-weight:bold;transform:scaleX(0.9437);">РЕЗУЛЬТАТ</div>
<div class="a" style="left:584px;top:374px;width:1354px;height:764px;background:#fff;border:1px solid #C6C6C6"></div>
<div class="a" style="left:678px;top:416px;width:1166px;height:147px;background:#FFC000"></div>
<div class="a t" style="left:1026.5px;top:456.0px;font-size:59px;color:#000;font-style:normal;font-weight:normal;transform:scaleX(0.8778);">ЕЛЕМЕНТИ НАУКИ</div>
<div class="a" style="left:679px;top:583px;width:364px;height:218px;background:#4472C4"></div>
<div class="a" style="left:1080px;top:583px;width:364px;height:218px;background:#4472C4"></div>
<div class="a" style="left:1481px;top:583px;width:363px;height:218px;background:#4472C4"></div>
<div class="a" style="left:880px;top:838px;width:363px;height:218px;background:#4472C4"></div>
<div class="a" style="left:1281px;top:838px;width:363px;height:218px;background:#4472C4"></div>
<div class="a t" style="left:763.1px;top:656.1px;font-size:66px;color:#fff;font-style:italic;font-weight:normal;transform:scaleX(0.9744);">Теорія</div>
<div class="a t" style="left:1116.0px;top:656.1px;font-size:66px;color:#fff;font-style:italic;font-weight:normal;transform:scaleX(1.0243);">Гіпотези</div>
<div class="a t" style="left:1550.0px;top:656.5px;font-size:66px;color:#fff;font-style:italic;font-weight:normal;transform:scaleX(1.0211);">Закони</div>
<div class="a t" style="left:904.9px;top:911.5px;font-size:66px;color:#fff;font-style:italic;font-weight:normal;transform:scaleX(1.0359);">Поняття</div>
<div class="a t" style="left:1339.9px;top:871.4px;font-size:66px;color:#fff;font-style:italic;font-weight:normal;transform:scaleX(1.0383);">Наукові</div>
<div class="a t" style="left:1330.9px;top:952.7px;font-size:66px;color:#fff;font-style:italic;font-weight:normal;transform:scaleX(1.0590);">методи</div>
<div class="a" style="left:117px;top:1152px;width:2008px;height:39px;background:#F1F1F1;border-top:1px solid #C9C9C9"></div>
<div class="a" style="left:117px;top:1153px;width:2008px;height:3px;background:#E6E6E6;border-bottom:1px solid #D0D0D0"></div>
<div class="a" style="left:1643px;top:1156px;width:47px;height:34px;background:#C8C8C8"></div>
<svg style="left:0;top:0" width="2151" height="1267" viewBox="0 0 2151 1267">
<g fill="none" stroke="#6E6E6E" stroke-width="1.2">
<path d="M251 1164 v17 h10 l2 1.5 l2 -1.5 h8 v-17 h-8 l-2 1.5 l-2 -1.5z M263 1165.5 v15.5"/>
</g>
<path d="M265 1177 l7 -8 l2.5 2.5 l-7 8 l-3.5 1z" fill="#F1F1F1" stroke="#6E6E6E" stroke-width="1.1"/>
<path d="M1420.9 1167.6 l3.8 -3.4 l3.8 3.4z" fill="#777"/>
<path d="M1415 1170.9 h18 M1415 1173.6 h18 M1415 1176.4 h18 M1415 1180.1 h9" stroke="#777" stroke-width="1.1"/>
<path d="M1524.2 1163.5 a1.5 1.5 0 0 1 1.5 -1.5 h16.7 a1.5 1.5 0 0 1 1.5 1.5 v11.8 a1.5 1.5 0 0 1 -1.5 1.5 h-7 l-3.5 5 v-5 h-6.2 a1.5 1.5 0 0 1 -1.5 -1.5z" fill="#777"/>
<g fill="none" stroke="#6A6A6A" stroke-width="1.2">
<rect x="1657.5" y="1163.5" width="19.5" height="17.5"/><path d="M1661.5 1163.5 v17.5 M1661.5 1176.5 h15.5"/><rect x="1665" y="1166.5" width="6" height="4.5"/>
<rect x="1704" y="1163.5" width="8.5" height="7.5"/><rect x="1715" y="1163.5" width="8.5" height="7.5"/><rect x="1704" y="1173.5" width="8.5" height="7.5"/><rect x="1715" y="1173.5" width="8.5" height="7.5"/>
<path d="M1751 1164 h9 l1 1 l1 -1 h9 v16 h-9 l-1 1 l-1 -1 h-9z M1761 1165 v15 M1753 1167 h6 M1753 1170 h6 M1753 1173 h6 M1753 1176 h6 M1763 1167 h6 M1763 1170 h6 M1763 1173 h6 M1763 1176 h6"/>
<path d="M1798 1164 h20 M1799.5 1164 v10 h17 v-10 M1808 1174 v6 M1803 1181 h10"/>
</g>
<path d="M1837.5 1172.5 h12.5" stroke="#555" stroke-width="2"/>
<path d="M1855 1172.5 h156" stroke="#B0B0B0" stroke-width="1"/>
<path d="M1933 1168.5 v8" stroke="#B0B0B0" stroke-width="1"/>
<rect x="1903.7" y="1164" width="6.3" height="17.4" fill="#555"/>
<path d="M2017 1172.5 h14 M2024 1165.5 v14" stroke="#555" stroke-width="2.2"/>
<g fill="none" stroke="#6A6A6A" stroke-width="1.2"><rect x="2098.5" y="1163.5" width="17.5" height="18"/></g>
<path d="M2102 1172.5 h3 M2109.5 1172.5 h3 M2107.2 1166 v3 M2107.2 1176 v3" stroke="#6A6A6A" stroke-width="1"/>
</svg>
<div class="a t" style="left:125.3px;top:1164.5px;font-size:16.5px;color:#595959;font-style:normal;font-weight:normal;transform:scaleX(0.9533);">Слайд 14 з 18</div>
<div class="a t" style="left:291.5px;top:1164.5px;font-size:16.5px;color:#595959;font-style:normal;font-weight:normal;transform:scaleX(0.9702);">українська</div>
<div class="a t" style="left:1438.5px;top:1164.9px;font-size:16.5px;color:#595959;font-style:normal;font-weight:normal;transform:scaleX(1.0253);">Нотатки</div>
<div class="a t" style="left:1549.0px;top:1164.9px;font-size:16.5px;color:#595959;font-style:normal;font-weight:normal;transform:scaleX(1.0288);">Примітки</div>
<div class="a t" style="left:2048.0px;top:1164.9px;font-size:16.5px;color:#595959;font-style:normal;font-weight:normal;transform:scaleX(0.9594);">68%</div>
<div class="a" style="left:117px;top:1191px;width:2008px;height:74px;background:linear-gradient(90deg,#1f2817 0%,#222619 40%,#26241f 55%,#1c2a28 75%,#172a2b 100%)"></div>
<svg style="left:0;top:0" width="2151" height="1267" viewBox="0 0 2151 1267">
<defs>
<linearGradient id="win" gradientUnits="userSpaceOnUse" x1="568" y1="1210" x2="605" y2="1247"><stop offset="0" stop-color="#7FDDFC"/><stop offset="1" stop-color="#1A9AE6"/></linearGradient>
<linearGradient id="edge" gradientUnits="userSpaceOnUse" x1="708" y1="1230" x2="745" y2="1215"><stop offset="0" stop-color="#1C7BD4"/><stop offset="0.5" stop-color="#2FB3E8"/><stop offset="1" stop-color="#6BE07A"/></linearGradient>
<linearGradient id="cop" x1="0" y1="0" x2="1" y2="1"><stop offset="0" stop-color="#3FB5F5"/><stop offset="0.4" stop-color="#8BD35A"/><stop offset="0.7" stop-color="#F36FA0"/><stop offset="1" stop-color="#9A5CF0"/></linearGradient>
<linearGradient id="drop" x1="0" y1="0" x2="0" y2="1"><stop offset="0" stop-color="#62A9FF"/><stop offset="1" stop-color="#1569F0"/></linearGradient>
<linearGradient id="fea" x1="0" y1="1" x2="1" y2="0"><stop offset="0" stop-color="#8A5AD0"/><stop offset="0.6" stop-color="#C8A0F8"/><stop offset="1" stop-color="#A070E8"/></linearGradient>
</defs>
<!-- weather -->
<path d="M150 1233 a6 6 0 0 1 5 -10 a9 9 0 0 1 17 -3 a7 7 0 0 1 14 6 a6 6 0 0 1 -3 11.5 h-28 a5 5 0 0 1 -5 -4.5z" fill="#C6DAF5"/>
<path d="M170 1229 l9.5 9 a5.5 5.5 0 0 1 -5 8.8 a5.5 5.5 0 0 1 -5 -6z" fill="url(#drop)"/>
<rect x="162.2" y="1201.6" width="36" height="23.6" rx="11.8" fill="#2D2D2D"/>
<!-- windows -->
<g fill="url(#win)"><rect x="568.1" y="1210.1" width="17.3" height="17.3" rx="1.5"/><rect x="587.3" y="1210.1" width="17.3" height="17.3" rx="1.5"/><rect x="568.1" y="1229.2" width="17.3" height="17.3" rx="1.5"/><rect x="587.3" y="1229.2" width="17.3" height="17.3" rx="1.5"/></g>
<!-- search -->
<circle cx="656" cy="1225" r="13.5" fill="#4A4E45" stroke="#F2F2F2" stroke-width="2.6"/>
<path d="M665.5 1235 L672.8 1243.5" stroke="#F2F2F2" stroke-width="3" stroke-linecap="round"/>
<!-- edge -->
<path d="M707.5 1229 C707.5 1215 718 1208.5 727 1208.5 C738 1208.5 745.2 1217 745.2 1226 C745.2 1231 741 1233 736 1233 C729 1233 727 1229 731 1225 C724 1220 712 1224 712 1234 C712 1242 720 1246.5 728 1246.5 C716 1246.5 707.5 1239 707.5 1229z" fill="url(#edge)"/>
<path d="M712 1234 C714 1244 730 1250 742 1239 C735 1242 722 1242 718 1232z" fill="#0F5DB5"/>
<circle cx="716.5" cy="1237.2" r="9" fill="#C8C8C8" stroke="#2a2a2a" stroke-width="1"/>
<circle cx="716.5" cy="1234.5" r="3" fill="#8E8E8E"/><path d="M710.5 1243 a6 5 0 0 1 12 0z" fill="#8E8E8E"/>
<!-- folder -->
<path d="M775.6 1213 a2 2 0 0 1 2 -2 h11 l3 3.5 h20.3 a2 2 0 0 1 2 2 v26.5 a2 2 0 0 1 -2 2 h-34.3 a2 2 0 0 1 -2 -2z" fill="#F5B92B"/>
<path d="M775.6 1219 h38.3 v24 a2 2 0 0 1 -2 2 h-34.3 a2 2 0 0 1 -2 -2z" fill="#FFD34E"/>
<path d="M783.4 1245 v-8 a3 3 0 0 1 3 -3 h17.5 a3 3 0 0 1 3 3 v8z" fill="#1C7CD6"/>
<path d="M788 1239.5 h14" stroke="#0B4F9A" stroke-width="1.5"/>
<!-- feather -->
<path d="M849.8 1244.5 C852 1232 862 1218 878.5 1210.6 C876 1222 868 1236 852 1242z" fill="url(#fea)"/>
<path d="M850 1244.5 C858 1235 866 1226 874 1216" stroke="#E6D0FA" stroke-width="0.8" fill="none"/>
<!-- chrome -->
<circle cx="933.1" cy="1227.5" r="19" fill="#DB4437"/>
<path d="M933.1 1227.5 L916.6 1237 A19 19 0 0 0 942.6 1244z" fill="#0F9D58"/>
<path d="M933.1 1227.5 L949.6 1218 A19 19 0 0 1 942.6 1244z" fill="#FFCD40"/>
<path d="M933.1 1227.5 L933.1 1208.5 A19 19 0 0 0 916.6 1237z" fill="#DB4437"/>
<circle cx="933.1" cy="1227.5" r="9" fill="#fff"/><circle cx="933.1" cy="1227.5" r="7.2" fill="#4285F4"/>
<!-- floppy64 -->
<path d="M984.7 1212 a2 2 0 0 1 2 -2 h28 l4.9 4.9 v29 a2 2 0 0 1 -2 2 h-30.9 a2 2 0 0 1 -2 -2z" fill="#2747C9"/>
<rect x="993" y="1210.5" width="17" height="10" fill="#D9D9D9"/><rect x="1004" y="1212" width="3.5" height="7" fill="#2747C9"/>
<rect x="988" y="1227" width="28" height="17" fill="#fff"/>
<path d="M990 1231 h24 M990 1235 h14 M990 1239 h14" stroke="#E04646" stroke-width="1"/>
<!-- word -->
<rect x="1066" y="1214" width="22" height="28" fill="#fff"/>
<path d="M1069 1219 h16 M1069 1223 h16 M1069 1227 h16 M1069 1231 h16 M1069 1235 h16" stroke="#2B579A" stroke-width="1.5"/>
<path d="M1054.2 1214.5 L1076 1211.1 V1244.5 L1054.2 1241z" fill="#2B579A"/>
<!-- copilot -->
<linearGradient id="copA" gradientUnits="userSpaceOnUse" x1="1125" y1="1212" x2="1150" y2="1238"><stop offset="0" stop-color="#2C9BF2"/><stop offset="0.55" stop-color="#6CCB6A"/><stop offset="1" stop-color="#F2C443"/></linearGradient>
<linearGradient id="copB" gradientUnits="userSpaceOnUse" x1="1132" y1="1220" x2="1157" y2="1245"><stop offset="0" stop-color="#F46B9C"/><stop offset="1" stop-color="#9B5CF2"/></linearGradient>
<path d="M1131 1212 h13 a4 4 0 0 1 4 5 l-5 17 a5 5 0 0 1 -5 3.5 h-11 a4 4 0 0 1 -4 -5 l5 -17 a5 5 0 0 1 5 -3.5z" fill="url(#copA)"/>
<path d="M1140 1220 h13 a4 4 0 0 1 4 5 l-5 15.5 a5 5 0 0 1 -5 3.5 h-13 a4 4 0 0 1 -4 -5 l5 -15.5 a5 5 0 0 1 5 -3.5z" fill="url(#copB)" opacity="0.92"/>
<!-- opera -->
<ellipse cx="1209.3" cy="1227.5" rx="18" ry="19.5" fill="#E0172B"/>
<ellipse cx="1209.3" cy="1227.5" rx="6.5" ry="13.5" fill="#26231d"/>
<!-- viber -->
<path d="M1262 1222 a16 15.5 0 0 1 32 0 v2 a16 15 0 0 1 -16 15 h-5 l-7 7 v-8 a16 15 0 0 1 -4 -10z" fill="#7360F2" stroke="#fff" stroke-width="2.2"/>
<path d="M1270 1218 c2 -2 4 -1 5 1 l1 3 c0 1.5 -1.5 2 -1 3 c1 2 3 4 5 5 c1 0.5 1.5 -1 3 -1 l3 1 c2 1 3 3 1 5 c-2 2 -5 2 -8 0 c-4 -2.5 -7 -6 -9 -10 c-1.5 -3 -1.5 -5 0 -7z" fill="#fff"/>
<rect x="1281" y="1202.3" width="24.7" height="23.9" rx="10" fill="#E8352E"/>
<!-- pdf -->
<rect x="1328.6" y="1209.3" width="37.5" height="36.5" rx="3" fill="#C4141E"/>
<path d="M1328.6 1232 h37.5 v10.8 a3 3 0 0 1 -3 3 h-31.5 a3 3 0 0 1 -3 -3z" fill="#9E0E16"/>
<path d="M1342 1243 l2 -6 l17 -12 l3 4 l-17 12z" fill="#fff"/>
<!-- photos -->
<rect x="1400" y="1213" width="33" height="26.5" fill="#D8E6EE"/>
<rect x="1402.5" y="1215.5" width="28" height="21.5" fill="#7FB5D9"/>
<path d="M1402.5 1230 c6 -6 12 -4 16 -1 c5 3 9 2 12 -1 v9 h-28z" fill="#3E7B5A"/>
<path d="M1398.9 1211.9 h6 v2.5 h-3.5 v3.5 h-2.5z M1434 1211.9 h-6 v2.5 h3.5 v3.5 h2.5z M1398.9 1240.6 h6 v-2.5 h-3.5 v-3.5 h-2.5z M1434 1240.6 h-6 v-2.5 h3.5 v-3.5 h2.5z" fill="#3A8FE0"/>
<!-- chrome2 -->
<circle cx="1485.3" cy="1227.5" r="19" fill="#DB4437"/>
<path d="M1485.3 1227.5 L1468.8 1237 A19 19 0 0 0 1494.8 1244z" fill="#0F9D58"/>
<path d="M1485.3 1227.5 L1501.8 1218 A19 19 0 0 1 1494.8 1244z" fill="#FFCD40"/>
<circle cx="1485.3" cy="1227.5" r="9" fill="#fff"/><circle cx="1485.3" cy="1227.5" r="7.2" fill="#4285F4"/>
<circle cx="1499.6" cy="1213.7" r="12.5" fill="#B8922E"/><circle cx="1498" cy="1212" r="6" fill="#E3B94A"/>
<!-- powerpoint -->
<rect x="1552" y="1214" width="19" height="28" fill="#fff"/>
<path d="M1556 1232 h12 M1556 1236 h12" stroke="#D24726" stroke-width="1.5"/>
<path d="M1557 1219 a6 6 0 0 1 6 6 h-6z" fill="#D24726"/>
<path d="M1537.4 1214.5 L1559 1211.1 V1244.5 L1537.4 1241z" fill="#D24726"/>
<!-- excel -->
<rect x="1618" y="1214" width="22" height="28" fill="#fff"/>
<path d="M1621 1219 h16 M1621 1223 h16 M1621 1227 h16 M1621 1231 h16 M1621 1235 h16 M1628 1216 v22" stroke="#1D6F42" stroke-width="1.3"/>
<path d="M1606.4 1214.5 L1628 1211.1 V1244.5 L1606.4 1241z" fill="#1D6F42"/>
<!-- dots -->
<g fill="#9A9A9A"><rect x="998" y="1253.3" width="9.5" height="4.8" rx="2.4"/><rect x="1067" y="1253.3" width="9.5" height="4.8" rx="2.4"/><rect x="1135.7" y="1253.3" width="9.5" height="4.8" rx="2.4"/><rect x="1274.2" y="1253.3" width="9.5" height="4.8" rx="2.4"/><rect x="1343.2" y="1253.3" width="9.5" height="4.8" rx="2.4"/><rect x="1411.6" y="1253.3" width="9.5" height="4.8" rx="2.4"/><rect x="1481" y="1253.3" width="9.5" height="4.8" rx="2.4"/><rect x="1550.4" y="1253.3" width="9.5" height="4.8" rx="2.4"/><rect x="1619" y="1253.3" width="9.5" height="4.8" rx="2.4"/></g>
<!-- tray -->
<path d="M1764.8 1231.3 L1772.9 1222.7 L1781.1 1231.3" fill="none" stroke="#fff" stroke-width="2.2"/>
<g fill="none" stroke="#fff" stroke-width="2.2" stroke-linecap="round">
<path d="M1880.5 1224 a17 17 0 0 1 23 0 M1884.5 1228 a11 11 0 0 1 15 0 M1888.5 1232 a5.5 5.5 0 0 1 7 0"/>
<path d="M1917.5 1223 h4.5 l6 -5 v19 l-6 -5 h-4.5z M1932 1223.5 a6 6 0 0 1 0 9 M1936 1220 a11 11 0 0 1 0 16 M1940 1217 a15 15 0 0 1 0 22"/>
<rect x="1956" y="1221.5" width="20" height="14" rx="2.5"/>
</g>
<path d="M1977.5 1225 h2 v7 h-2z" fill="#fff"/>
<path d="M1959 1233 v-8 l5 -2 l-3 10z" fill="#fff"/>
<path d="M1961 1215 l-2 6 h4 l-2 5" fill="none" stroke="#fff" stroke-width="1.6"/>
<circle cx="1892" cy="1235" r="1.8" fill="#fff"/>
</svg>
<div class="a t" style="left:1813.6px;top:1218.6px;font-size:19.5px;color:#fff;font-style:normal;font-weight:normal;transform:scaleX(0.8830);">ENG</div>
<div class="a t" style="left:168.6px;top:1204.4px;font-size:18px;color:#fff;font-style:normal;font-weight:normal;transform:scaleX(0.8839);">10°</div>
<div class="a t" style="left:1284.5px;top:1206.0px;font-size:16px;color:#fff;font-style:normal;font-weight:normal;transform:scaleX(0.9777);">50</div>
<div class="a t" style="left:2051.4px;top:1205.2px;font-size:19.5px;color:#fff;font-style:normal;font-weight:normal;transform:scaleX(0.9050);">22:40</div>
<div class="a t" style="left:2007.1px;top:1230.1px;font-size:19.5px;color:#fff;font-style:normal;font-weight:normal;transform:scaleX(0.9169);">03.11.2025</div>
<div class="a t" style="left:1056.5px;top:1221.3px;font-size:15px;color:#fff;font-style:normal;font-weight:bold;transform:scaleX(1.0333);">W</div>
<div class="a t" style="left:1539.8px;top:1220.5px;font-size:16px;color:#fff;font-style:normal;font-weight:bold;transform:scaleX(1.2000);">P</div>
<div class="a t" style="left:1610.0px;top:1221.3px;font-size:15px;color:#fff;font-style:normal;font-weight:bold;transform:scaleX(1.2000);">X</div>
<div class="a t" style="left:1331.5px;top:1214.0px;font-size:9.5px;color:#fff;font-style:normal;font-weight:bold;transform:scaleX(0.9637);">PDF</div>
<svg style="left:0;top:0" width="2151" height="1267" viewBox="0 0 2151 1267">
<path d="M1862 158 v-7 h21 v7 M1862 154.5 h21 M1872.5 158 l-3 -2.5 h6z" fill="none" stroke="#fff" stroke-width="1.6"/>
<path d="M2006.8 158 v-3 h13.5 v3 M2012.5 155 v-4.2 h13.2 v7.2" fill="none" stroke="#fff" stroke-width="1.6"/>
<path d="M2081 151.5 l7.5 6.5 l7.5 -6.5" fill="none" stroke="#fff" stroke-width="2.4"/>
</svg>
<div class="a" style="left:2112px;top:158px;width:34px;height:396px;background:#EEEAE5">
<div class="a" style="left:0;top:0;width:24px;height:61px;background:#fff;border-radius:0 0 9px 0;box-shadow:1px 1px 0 #E2DDD8"></div>
<div class="a" style="left:15px;top:70px;width:19px;height:35px;background:#F4F2F0;border-radius:9px"></div>
<div class="a" style="left:15.5px;top:104px;width:11.7px;height:27.6px;background:#6B6B6B;border-radius:6px"></div>
<svg style="left:0;top:0" width="34" height="396"><path d="M14.5 80 l7 -10 l7 10z" fill="#6B6B6B"/><path d="M-2 42 l4 -3 l5 -6" stroke="#333" stroke-width="1.6" fill="none"/></svg>
</div>
<div class="a" style="left:1754px;top:158px;width:358px;height:396px;background:#141414;overflow:hidden">
<svg style="left:0;top:0" width="358" height="396" viewBox="1754 158 358 396">
<defs>
<filter id="b2" x="-20%" y="-20%" width="140%" height="140%"><feGaussianBlur stdDeviation="2"/></filter>
<filter id="b4" x="-30%" y="-30%" width="160%" height="160%"><feGaussianBlur stdDeviation="4"/></filter>
<filter id="b10" x="-50%" y="-50%" width="200%" height="200%"><feGaussianBlur stdDeviation="10"/></filter>
<clipPath id="c1"><rect x="1755" y="159" width="352" height="198" rx="9"/></clipPath>
<clipPath id="c2"><rect x="1755" y="357.5" width="352" height="197"/></clipPath>
<linearGradient id="bg1" x1="0" y1="0" x2="1" y2="0"><stop offset="0" stop-color="#8E979B"/><stop offset="0.15" stop-color="#A3ACB0"/><stop offset="0.35" stop-color="#B8BDBD"/><stop offset="0.55" stop-color="#A8A69E"/><stop offset="0.75" stop-color="#85827A"/><stop offset="1" stop-color="#7B7B76"/></linearGradient>
<linearGradient id="bg2" x1="0" y1="0" x2="1" y2="0"><stop offset="0" stop-color="#A8BCCF"/><stop offset="0.3" stop-color="#C9CED0"/><stop offset="0.6" stop-color="#CBCEC8"/><stop offset="1" stop-color="#B2B8B0"/></linearGradient>
</defs>
<g clip-path="url(#c1)">
<rect x="1754" y="158" width="358" height="200" fill="url(#bg1)"/>
<g filter="url(#b10)">
<rect x="1745" y="150" width="22" height="210" fill="#8A9196"/>
<ellipse cx="1795" cy="175" rx="14" ry="22" fill="#50565A"/>
<ellipse cx="1776" cy="228" rx="12" ry="40" fill="#6E8090"/>
<ellipse cx="1828" cy="270" rx="14" ry="45" fill="#DCE6EC"/>
<ellipse cx="1954" cy="186" rx="24" ry="13" fill="#FFFFFA"/>
<ellipse cx="2040" cy="240" rx="60" ry="25" fill="#7A7260"/>
<ellipse cx="2050" cy="315" rx="50" ry="30" fill="#888B85"/>
<ellipse cx="2025" cy="284" rx="14" ry="10" fill="#5E625E"/>
<ellipse cx="2100" cy="300" rx="12" ry="25" fill="#7C8C98"/>
<rect x="2060" y="158" width="50" height="50" fill="#777671"/>
</g>
<g filter="url(#b2)">
<path d="M1919 181 C1950 180 1978 205 1978 238 C1978 258 1972 270 1964 278 L1870 278 C1858 265 1848 250 1849 233 C1850 203 1885 182 1919 181z" fill="#2F2526"/>
<defs><linearGradient id="face1" x1="0" y1="0" x2="0" y2="1"><stop offset="0" stop-color="#E3BDB4"/><stop offset="1" stop-color="#D29C94"/></linearGradient></defs><path d="M1881 258 C1880 230 1895 213 1921 213 C1948 213 1963 230 1962 258 C1961 288 1945 308 1921 308 C1897 308 1882 288 1881 258z" fill="url(#face1)"/>
<path d="M1890 296 L1952 296 L1921 331z" fill="#D3A098"/>
<path d="M1776 360 C1790 325 1805 300 1873 281 C1880 290 1888 298 1893 300 L1921 331 L1948 300 C1952 296 1955 290 1957 283 C1975 286 1984 290 1988 292 C2030 315 2055 335 2075 360z" fill="#DE4A80"/>
</g>
<g filter="url(#b2)"><ellipse cx="1903" cy="256" rx="5" ry="2.5" fill="#6A4C4C"/><ellipse cx="1943" cy="256" rx="5" ry="2.5" fill="#6A4C4C"/><ellipse cx="1921" cy="289" rx="10" ry="2.5" fill="#B06A70"/><ellipse cx="1921" cy="274" rx="4" ry="3" fill="#C98F88"/></g>
<g fill="none" stroke="#40363A" stroke-width="3.4" filter="url(#b2)" opacity="0.9"><rect x="1886" y="241" width="34" height="27" rx="9"/><rect x="1926" y="242" width="36" height="27" rx="9"/></g>
<rect x="1760.7" y="324.5" width="125.8" height="29.1" rx="7" fill="#2a2a2a" fill-opacity="0.45"/>
</g>
<g clip-path="url(#c2)">
<rect x="1754" y="357" width="358" height="200" fill="url(#bg2)"/>
<g filter="url(#b10)">
<rect x="1740" y="345" width="120" height="60" fill="#9CBCE0"/>
<rect x="1765" y="398" width="82" height="116" fill="#E4E6E8"/>
<ellipse cx="1817" cy="486" rx="14" ry="10" fill="#D4A8AE"/>
<ellipse cx="1792" cy="469" rx="8" ry="8" fill="#8D979C"/>
<rect x="1826" y="506" width="80" height="40" fill="#55605C"/>
<rect x="2008" y="494" width="110" height="70" fill="#2F4440"/>
<rect x="1754" y="357" width="358" height="14" fill="#8C918D"/>
<rect x="2090" y="360" width="30" height="200" fill="#9EA59A"/>
</g>
<g filter="url(#b2)">
<path d="M1868 560 C1872 530 1880 508 1892 502 C1905 494 1915 490 1924 489 L1947 508 L1970 482 C1990 488 2008 496 2015 503 C2030 515 2040 535 2046 560z" fill="#1E2535"/>
<path d="M1917 455 C1917 432 1930 424 1947 424 C1966 424 1979 434 1979 456 C1979 485 1965 506 1946 506 C1927 506 1917 485 1917 455z" fill="#D8AFA1"/>
<ellipse cx="1933" cy="457" rx="5" ry="2.2" fill="#7A5A50"/><ellipse cx="1962" cy="457" rx="5" ry="2.2" fill="#7A5A50"/><ellipse cx="1947" cy="487" rx="9" ry="3.5" fill="#9C6860"/><path d="M1926 449 h14 M1955 449 h14" stroke="#8A6A5A" stroke-width="2.5"/>
<ellipse cx="1916" cy="463" rx="4" ry="8" fill="#D0A595"/><ellipse cx="1980" cy="463" rx="4" ry="8" fill="#D0A595"/>
<path d="M1920 445 C1916 422 1930 412 1949 412 C1968 412 1982 422 1979 447 C1975 434 1965 430 1949 430 C1932 430 1924 434 1920 445z" fill="#6B5A4E"/>
</g>
<rect x="1760" y="521.6" width="171.3" height="30.8" rx="7" fill="#2a2a2a" fill-opacity="0.45"/>
</g>
<rect x="2107" y="158" width="5" height="396" fill="#050505"/>
</svg>
</div>
<div class="a t" style="left:1764.3px;top:327.6px;font-size:21.5px;color:#F4EEE4;font-style:normal;font-weight:normal;transform:scaleX(0.9068);text-shadow:0 0 2px #222;">Віра Бутенко</div>
<div class="a t" style="left:1765.2px;top:525.0px;font-size:21.5px;color:#F4EEE4;font-style:normal;font-weight:normal;transform:scaleX(0.9092);text-shadow:0 0 2px #222;">Yevhenii Yelizariev</div>
</body></html>
